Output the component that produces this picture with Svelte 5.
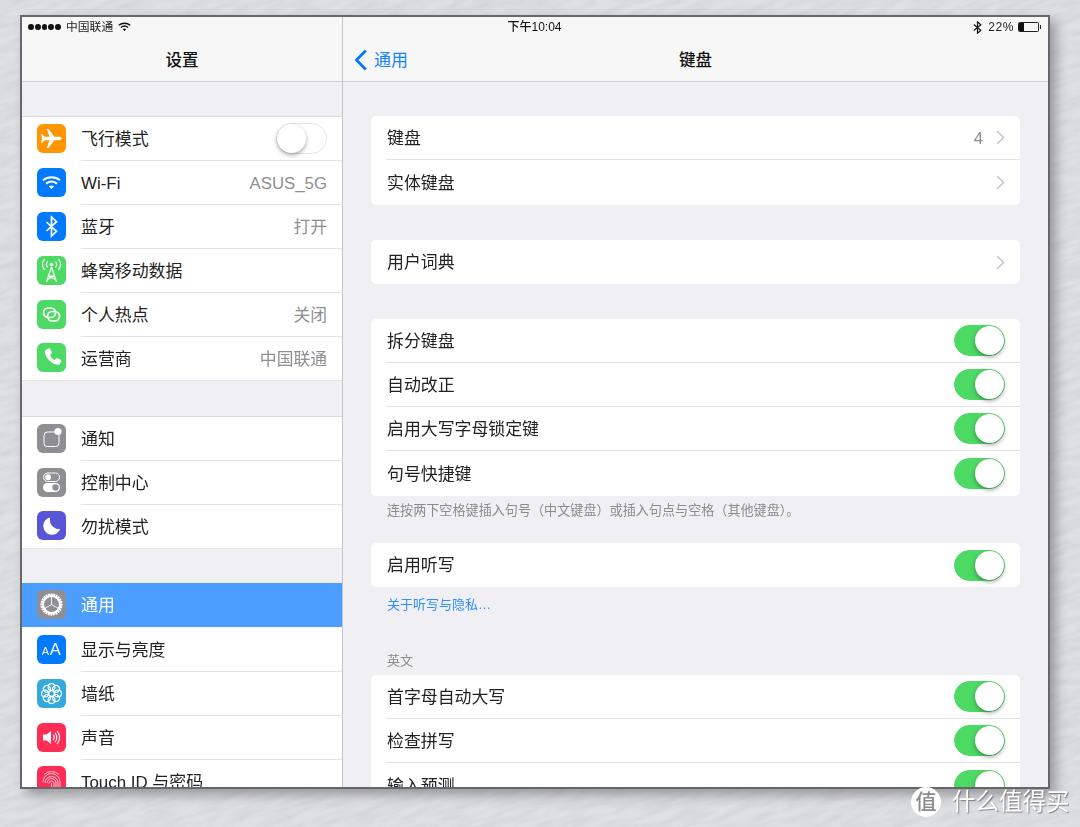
<script>
  // settings list on the left, keyboard page on the right
  const groups = [
    [
      { icon: 'plane', color: '#ff9500', label: '飞行模式', toggle: false },
      { icon: 'wifi', color: '#007aff', label: 'Wi-Fi', value: 'ASUS_5G' },
      { icon: 'bt', color: '#007aff', label: '蓝牙', value: '打开' },
      { icon: 'cell', color: '#4cd964', label: '蜂窝移动数据' },
      { icon: 'hotspot', color: '#4cd964', label: '个人热点', value: '关闭' },
      { icon: 'phone', color: '#4cd964', label: '运营商', value: '中国联通' }
    ],
    [
      { icon: 'notify', color: '#8e8e93', label: '通知' },
      { icon: 'control', color: '#8e8e93', label: '控制中心' },
      { icon: 'moon', color: '#5856d6', label: '勿扰模式' }
    ],
    [
      { icon: 'gear', color: '#8e8e93', label: '通用', active: true },
      { icon: 'aa', color: '#007aff', label: '显示与亮度' },
      { icon: 'flower', color: '#34aadc', label: '墙纸' },
      { icon: 'sound', color: '#ff2d55', label: '声音' },
      { icon: 'touch', color: '#ff2d55', label: 'Touch ID 与密码' }
    ]
  ];

  const teeth = Array.from({ length: 24 }, (_, i) => i * 15);
  const petals = [0, 45, 90, 135, 180, 225, 270, 315];
</script>

{#snippet toggle(on)}
  <span class="switch" class:on><span class="knob"></span></span>
{/snippet}

{#snippet chevron()}
  <svg class="chev" width="9" height="15" viewBox="0 0 9 15"><path d="M1 1l6.5 6.5L1 14" fill="none" stroke="#c7c7cc" stroke-width="1.6"/></svg>
{/snippet}

{#snippet glyph(name)}
  <svg width="29" height="29" viewBox="0 0 29 29">
    {#if name === 'plane'}
      <path d="M24.5 14.5c0-1.2-1.3-1.7-2.6-1.7h-4.6L11.6 5H9.7l2.9 7.8H7.4L5.5 10.2H4.1l1 4.3-1 4.3h1.4l1.9-2.6h5.2l-2.9 7.8h1.9l5.7-7.8h4.6c1.3 0 2.6-.5 2.6-1.7z" fill="#fff"/>
    {:else if name === 'wifi'}
      <g fill="none" stroke="#fff" stroke-width="2"><path d="M6 12.2c5-4 12-4 17 0"/><path d="M9 15.6c3.3-2.5 7.7-2.5 11 0"/></g>
      <path d="M11.8 18.3c1.7-1.1 3.7-1.1 5.4 0l-2.7 3z" fill="#fff"/>
    {:else if name === 'bt'}
      <path d="M9.5 10l10 9.3-5 4.7V5l5 4.7-10 9.3" fill="none" stroke="#fff" stroke-width="1.7"/>
    {:else if name === 'cell'}
      <g fill="none" stroke="#fff" stroke-width="1.2">
        <path d="M14.5 11L9.5 26M14.5 11l5 15M11.5 20h6M10.5 23.5l7-3.5M18.5 23.5l-7-3.5"/>
        <path d="M10.5 11.5a5 5 0 0 1 0-6M18.5 5.5a5 5 0 0 1 0 6"/>
        <path d="M7.5 14a9 9 0 0 1 0-11M21.5 3a9 9 0 0 1 0 11"/>
      </g>
      <circle cx="14.5" cy="8.5" r="1.8" fill="#fff"/>
    {:else if name === 'hotspot'}
      <g fill="none" stroke="#fff" stroke-width="1.7">
        <rect x="6.5" y="8" width="12" height="9.5" rx="4.7"/>
        <rect x="10.5" y="11.5" width="12" height="9.5" rx="4.7"/>
      </g>
    {:else if name === 'phone'}
      <path d="M9.8 6.2l2.4-.9c.5-.2.9 0 1.1.5l1.6 3.6c.2.5.1.9-.3 1.2l-1.7 1.4c.9 2.3 2.5 4 4.8 5.1l1.5-1.6c.4-.4.8-.5 1.3-.2l3.4 1.8c.5.2.6.7.4 1.2l-1 2.2c-.4 1-1.4 1.5-2.5 1.3C14.5 21.4 8.4 15 7.9 9.3c-.1-1.4.7-2.6 1.9-3.1z" fill="#fff"/>
    {:else if name === 'notify'}
      <path d="M19 8h-8.5A3.5 3.5 0 0 0 7 11.5v8a3 3 0 0 0 3 3h8.5a3.5 3.5 0 0 0 3.5-3.5v-8" fill="none" stroke="#fff" stroke-width="1"/>
      <circle cx="21" cy="7.5" r="3.6" fill="#fff"/>
    {:else if name === 'control'}
      <rect x="6.5" y="5" width="16" height="8.5" rx="4.2" fill="none" stroke="#fff" stroke-width="1"/>
      <circle cx="11" cy="9.2" r="3" fill="#fff"/>
      <rect x="6" y="15" width="17" height="9" rx="4.5" fill="#fff"/>
      <circle cx="18.5" cy="19.5" r="3.2" fill="#8e8e93"/>
    {:else if name === 'moon'}
      <path d="M13.2 6.5a8.7 8.7 0 1 0 10 11.2c-5.8 1.4-11.8-4.3-10-11.2z" fill="#fff"/>
    {:else if name === 'gear'}
      <g fill="#fff">
        {#each teeth as a}
          <rect x="13.6" y="3.4" width="2" height="3.4" transform="rotate({a} 14.5 14.5)"/>
        {/each}
      </g>
      <circle cx="14.5" cy="14.5" r="8.4" fill="none" stroke="#fff" stroke-width="2"/>
      <path d="M14.5 14.5V6.5M14.5 14.5l7 4M14.5 14.5l-7 4" stroke="#fff" stroke-width="0.9"/>
    {:else if name === 'aa'}
      <text x="4.7" y="20" class="aa small">A</text>
      <text x="12.8" y="20" class="aa big">A</text>
    {:else if name === 'flower'}
      <g fill="none" stroke="#fff" stroke-width="1.1">
        {#each petals as a}
          <circle cx="14.5" cy="8" r="3.4" transform="rotate({a} 14.5 14.5)"/>
        {/each}
        <circle cx="14.5" cy="14.5" r="2.8"/>
      </g>
    {:else if name === 'sound'}
      <path d="M6 11.5h3.5L14 8v13l-4.5-3.5H6z" fill="#fff"/>
      <g fill="none" stroke="#fff" stroke-width="1.1">
        <path d="M16 11.8a4 4 0 0 1 0 5.4"/>
        <path d="M18 9.8a7 7 0 0 1 0 9.4"/>
        <path d="M20 7.8a10 10 0 0 1 0 13.4"/>
      </g>
    {:else if name === 'touch'}
      <g fill="none" stroke="#fff" stroke-width="0.8" opacity="0.9">
        <path d="M6 16a8.5 8.5 0 0 1 17 0v6"/>
        <path d="M8 17a6.5 6.5 0 0 1 13 0v7"/>
        <path d="M10 17a4.5 4.5 0 0 1 9 0v8"/>
        <path d="M12 17.5a2.5 2.5 0 0 1 5 0v8"/>
        <path d="M14.5 17v9M6 21v4M8 21v6M10 21v6M12 22v5"/>
        <path d="M7 8.5a11 11 0 0 1 15 0"/>
      </g>
    {/if}
  </svg>
{/snippet}

{#snippet settingRow(label, on)}
  <div class="row">
    <span class="label">{label}</span>
    {@render toggle(on)}
  </div>
{/snippet}

{#snippet navRow(label, value)}
  <div class="row">
    <span class="label">{label}</span>
    {#if value}<span class="value">{value}</span>{/if}
    {@render chevron()}
  </div>
{/snippet}

<div class="page">
  <svg class="paper" width="1080" height="827" aria-hidden="true">
    <filter id="grain" x="0" y="0" width="100%" height="100%">
      <feTurbulence type="fractalNoise" baseFrequency="0.05 0.22" numOctaves="3" seed="7"/>
      <feColorMatrix values="0 0 0 0 0.55  0 0 0 0 0.55  0 0 0 0 0.58  0.75 0 0 0 -0.24"/>
    </filter>
    <rect width="1080" height="827" filter="url(#grain)" transform="rotate(-18 540 413) scale(1.4) translate(-150 -120)"/>
  </svg>

  <div class="frame">
    <div class="status">
      <div class="status-left">
        <span class="dots"><i></i><i></i><i></i><i></i><i></i></span>
        <span>中国联通</span>
        <svg width="13" height="10" viewBox="0 0 13 10"><g fill="none" stroke="#111" stroke-width="1.5"><path d="M.8 3.3c3.3-2.8 8.1-2.8 11.4 0"/><path d="M2.9 5.5c2.1-1.7 5.1-1.7 7.2 0"/></g><path d="M4.8 7c1-.7 2.4-.7 3.4 0L6.5 9.2z" fill="#111"/></svg>
      </div>
      <div class="clock">下午10:04</div>
      <div class="status-right">
        <svg width="9" height="13" viewBox="0 0 9 13"><path d="M.8 3.5l7 5.7-3.3 3V.8l3.3 3-7 5.7" fill="none" stroke="#111" stroke-width="1.2"/></svg>
        <span class="pct">22%</span>
        <span class="battery"><span></span></span>
      </div>
    </div>

    <aside class="side">
      <header class="nav"><h1>设置</h1></header>
      <div class="side-list">
        {#each groups as group}
          <section class="group">
            {#each group as item}
              <div class="item" class:active={item.active}>
                <span class="tile" style="background:{item.color}">{@render glyph(item.icon)}</span>
                <div class="item-body">
                  <span class="label">{item.label}</span>
                  {#if item.value}<span class="value">{item.value}</span>{/if}
                  {#if item.toggle === false}{@render toggle(false)}{/if}
                </div>
              </div>
            {/each}
          </section>
        {/each}
      </div>
    </aside>

    <main class="detail">
      <header class="nav">
        <div class="back">
          <svg width="14" height="22" viewBox="0 0 14 22"><path d="M11.8 1.5L2.5 11l9.3 9.5" fill="none" stroke="#007aff" stroke-width="2.8"/></svg>
          <span>通用</span>
        </div>
        <h1>键盘</h1>
      </header>
      <div class="detail-list">
        <div class="card">
          {@render navRow('键盘', '4')}
          {@render navRow('实体键盘')}
        </div>
        <div class="card">
          {@render navRow('用户词典')}
        </div>
        <div class="card">
          {@render settingRow('拆分键盘', true)}
          {@render settingRow('自动改正', true)}
          {@render settingRow('启用大写字母锁定键', true)}
          {@render settingRow('句号快捷键', true)}
        </div>
        <p class="note">连按两下空格键插入句号（中文键盘）或插入句点与空格（其他键盘）。</p>
        <div class="card tight">
          {@render settingRow('启用听写', true)}
        </div>
        <p class="link">关于听写与隐私…</p>
        <p class="caption">英文</p>
        <div class="card tight">
          {@render settingRow('首字母自动大写', true)}
          {@render settingRow('检查拼写', true)}
          {@render settingRow('输入预测', true)}
        </div>
      </div>
    </main>
  </div>

  <div class="mark">
    <span class="mark-badge">值</span>
    <span class="mark-text">什么值得买</span>
  </div>
</div>

<style>
  :global(body) {
    margin: 0;
    background: #dfe0e3;
  }

  .page {
    position: relative;
    width: 1080px;
    height: 827px;
    overflow: hidden;
    padding: 15px 30px 0 20px;
    box-sizing: border-box;
    font-family: "Liberation Sans", "Noto Sans CJK SC", sans-serif;
    color: #222;
  }

  .paper {
    position: absolute;
    left: 0;
    top: 0;
  }

  .frame {
    position: relative;
    display: flex;
    width: 1030px;
    height: 774px;
    box-sizing: border-box;
    border: 2px solid #66676a;
    background: #efeff4;
    overflow: hidden;
    box-shadow: 6px 6px 11px rgba(70, 70, 75, 0.45);
    filter: blur(0.35px);
  }

  /* status bar sits over both nav bars */
  .status {
    position: absolute;
    left: 0;
    top: 0;
    right: 0;
    height: 20px;
    display: flex;
    align-items: center;
    font-size: 12px;
    line-height: 14px;
    color: #222;
    z-index: 2;
  }

  .status-left {
    flex: 1;
    display: flex;
    align-items: center;
    gap: 5px;
    padding-left: 6px;
    font-size: 11.8px;
  }

  .status-left svg {
    margin-top: -1px;
  }

  .dots {
    display: flex;
    gap: 1px;
  }

  .dots i {
    width: 5.8px;
    height: 5.8px;
    border-radius: 50%;
    background: #111;
  }

  .clock {
    font-weight: 500;
    color: #111;
  }

  .status-right {
    flex: 1;
    display: flex;
    align-items: center;
    justify-content: flex-end;
    padding-right: 7px;
  }

  .pct {
    margin-left: 6px;
    letter-spacing: 0.6px;
  }

  .battery {
    position: relative;
    width: 21px;
    height: 10px;
    margin-left: 4px;
    margin-right: 2px;
    box-sizing: border-box;
    border: 1px solid #222;
    border-radius: 1.5px;
  }

  .battery span {
    display: block;
    width: 5px;
    height: 100%;
    background: #111;
  }

  .battery::after {
    content: "";
    position: absolute;
    right: -3px;
    top: 2px;
    width: 1.5px;
    height: 4px;
    background: #222;
  }

  .nav {
    position: relative;
    display: flex;
    align-items: center;
    justify-content: center;
    height: 65px;
    padding-top: 20px;
    box-sizing: border-box;
    background: #f7f7f7;
    border-bottom: 1px solid #cfcfd2;
  }

  h1 {
    margin: 0;
    padding-top: 2px;
    font-size: 16.5px;
    line-height: 20px;
    font-weight: 500;
    color: #111;
  }

  .side {
    width: 321px;
    flex: none;
    box-sizing: border-box;
    border-right: 1px solid #c6c6ca;
  }

  .side-list {
    padding-top: 34px;
  }

  .group {
    margin-bottom: 35px;
    background: #fff;
    border-top: 1px solid #dcdce0;
  }

  .group:last-child {
    margin-top: -1px;
    border-top: 0;
  }

  .item {
    display: flex;
    align-items: center;
    height: 44px;
    padding-left: 15px;
  }

  .tile {
    display: block;
    width: 29px;
    height: 29px;
    flex: none;
    margin-top: -2px;
    border-radius: 6px;
    margin-right: 15px;
  }

  .tile svg {
    display: block;
  }

  .item-body {
    flex: 1;
    display: flex;
    align-items: center;
    justify-content: space-between;
    align-self: stretch;
    padding-right: 15px;
    border-bottom: 1px solid #e4e4e6;
  }

  .group .item:last-child .item-body {
    border-bottom: 0;
  }

  .group .item:last-child {
    border-bottom: 1px solid #e4e4e6;
    box-sizing: border-box;
  }

  .item.active {
    margin-bottom: 1px;
    background: #4b9eff;
    color: #fff;
  }

  .item.active .item-body {
    border-bottom: 0;
  }

  .label {
    padding-top: 2px;
    font-size: 16.9px;
    line-height: 22px;
  }

  .value {
    padding-top: 2px;
    font-size: 16.8px;
    line-height: 22px;
    color: #8e8e93;
  }

  .aa {
    fill: #fff;
    font-family: "Liberation Sans", sans-serif;
  }

  .aa.small {
    font-size: 11px;
  }

  .aa.big {
    font-size: 16.5px;
  }

  .detail {
    flex: 1;
    min-width: 0;
  }

  .back {
    position: absolute;
    left: 11px;
    top: 30px;
    display: flex;
    align-items: center;
    gap: 6px;
    color: #1583ff;
    font-size: 17px;
    line-height: 22px;
  }

  .back span {
    padding-top: 3px;
  }

  .detail-list {
    padding: 34px 28px 0;
  }

  .card {
    background: #fff;
    border-radius: 5px;
    margin-bottom: 35px;
  }

  .card.tight {
    margin-bottom: 0;
  }

  .row {
    display: flex;
    align-items: center;
    height: 44px;
    box-sizing: border-box;
    margin-left: 15px;
    padding-right: 15px;
    border-bottom: 1px solid #e4e4e6;
  }

  .row:last-child {
    border-bottom: 0;
  }

  /* multi-row cards come out one pixel taller */
  .row:last-child:not(:first-child) {
    height: 45px;
  }

  .row .label {
    flex: 1;
    padding-left: 1px;
  }

  .row .value {
    margin-right: 13px;
  }

  .chev {
    display: block;
  }

  .note {
    margin: -35px 0 0;
    height: 47px;
    padding: 7px 16px 0;
    box-sizing: border-box;
    font-size: 13.1px;
    line-height: 16px;
    color: #8a8a8f;
  }

  .link {
    margin: 0;
    height: 55px;
    padding: 10px 16px 0;
    box-sizing: border-box;
    font-size: 13px;
    line-height: 16px;
    color: #2f8fff;
  }

  .caption {
    margin: 0;
    height: 33px;
    padding: 11px 16px 0;
    box-sizing: border-box;
    font-size: 13px;
    line-height: 16px;
    color: #8a8a8f;
  }

  .switch {
    position: relative;
    display: block;
    width: 51px;
    height: 31px;
    flex: none;
    box-sizing: border-box;
    border-radius: 16px;
    border: 1px solid #e5e5e8;
    background: #fff;
  }

  .switch.on {
    border-color: #4cd964;
    background: #4cd964;
  }

  .knob {
    position: absolute;
    left: 0;
    top: 0;
    width: 29px;
    height: 29px;
    border-radius: 50%;
    background: #fff;
    box-shadow: 0 2px 4px rgba(0, 0, 0, 0.35);
  }

  .switch.on .knob {
    left: 20px;
  }

  .mark {
    position: absolute;
    left: 911px;
    top: 787px;
    display: flex;
    align-items: center;
    gap: 11px;
  }

  .mark-badge {
    width: 30px;
    height: 30px;
    border-radius: 50%;
    background: #fff;
    color: #8b8b8e;
    font-size: 21px;
    font-weight: 500;
    line-height: 30px;
    text-align: center;
  }

  .mark-text {
    font-size: 23.5px;
    color: #fff;
    text-shadow: 1px 1px 1px rgba(90, 90, 90, 0.7);
    line-height: 30px;
  }
</style>
